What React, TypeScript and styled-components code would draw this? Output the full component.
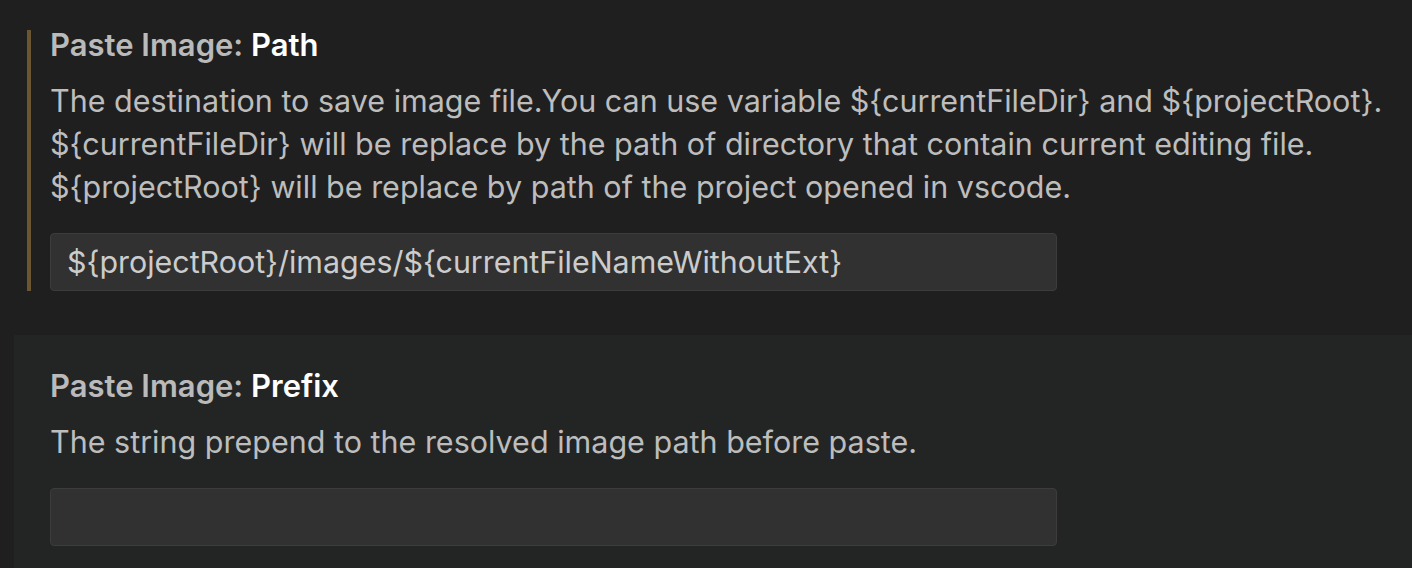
import styled, { createGlobalStyle } from 'styled-components'

const GlobalStyle = createGlobalStyle`
  html, body {
    margin: 0;
    padding: 0;
    background: #1f1f1f;
  }
  body {
    font-family: Inter, "Noto Sans", "Liberation Sans", sans-serif;
    -webkit-font-smoothing: antialiased;
  }
`

const Page = styled.div`
  padding: 30px 0 0 14px;
  min-height: 568px;
  box-sizing: border-box;
  overflow: hidden;
`

const Item = styled.section<{ focused?: boolean }>`
  display: flex;
  flex-direction: column;
  margin-left: ${(p) => (p.focused ? '13px' : '0')};
  padding: ${(p) => (p.focused ? '0 0 0 19px' : '36px 0 40px 36px')};
  border-left: ${(p) => (p.focused ? '4px solid #6c5632' : 'none')};
  background: ${(p) => (p.focused ? 'transparent' : '#232525')};
  margin-top: ${(p) => (p.focused ? '0' : '44px')};
`

const Title = styled.div`
  font-size: 31px;
  line-height: 30px;
  font-weight: 600;
  color: #bababa;
  white-space: nowrap;
`

const Name = styled.span`
  color: #ffffff;
`

const Desc = styled.div`
  margin-top: 19px;
  font-size: 30.5px;
  line-height: 43px;
  color: #bdbdbd;
  white-space: pre;
`

const Input = styled.div`
  margin-top: 25px;
  width: 1007px;
  height: 58px;
  box-sizing: border-box;
  display: flex;
  align-items: center;
  padding: 0 16px;
  background: #313131;
  border: 1px solid #3c3c3c;
  border-radius: 4px;
  font-size: 30.4px;
  color: #cccccc;
  white-space: nowrap;
`

export default function App() {
  return (
    <>
      <GlobalStyle />
      <Page>
        <Item focused>
          <Title>
            Paste Image: <Name>Path</Name>
          </Title>
          <Desc>
            {'The destination to save image file.You can use variable ${currentFileDir} and ${projectRoot}.\n${currentFileDir} will be replace by the path of directory that contain current editing file.\n${projectRoot} will be replace by path of the project opened in vscode.'}
          </Desc>
          <Input>{'${projectRoot}/images/${currentFileNameWithoutExt}'}</Input>
        </Item>
        <Item>
          <Title>
            Paste Image: <Name>Prefix</Name>
          </Title>
          <Desc>The string prepend to the resolved image path before paste.</Desc>
          <Input />
        </Item>
      </Page>
    </>
  )
}
